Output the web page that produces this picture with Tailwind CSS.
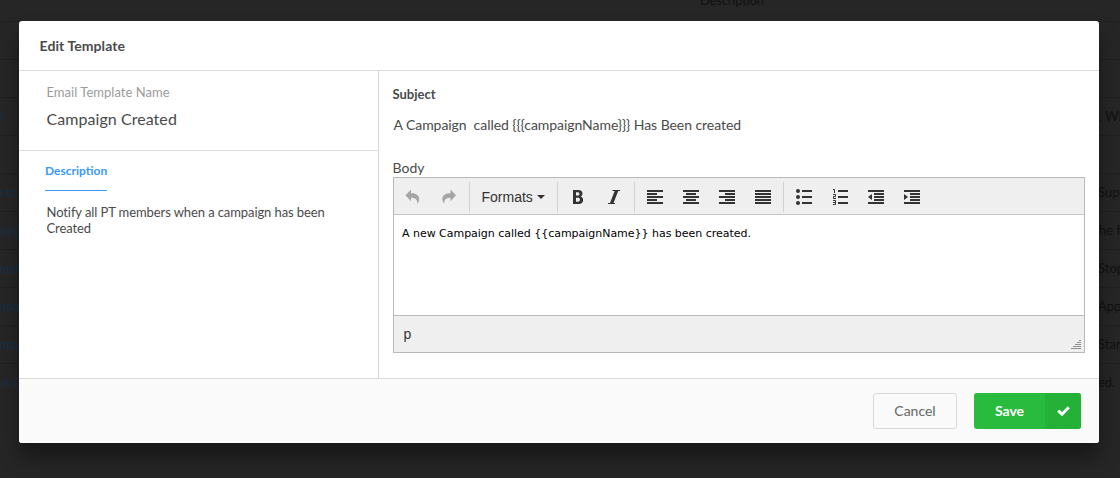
<!DOCTYPE html>
<html lang="en">
<head>
<meta charset="utf-8">
<title>Edit Template</title>
<script src="https://cdn.jsdelivr.net/npm/@tailwindcss/browser@4"></script>
</head>
<body class="relative h-[478px] w-[1120px] overflow-hidden bg-[#262626] font-['Lato',sans-serif] text-[#4a4a4a]">

<!-- dimmed table behind the dialog -->
<div class="flex h-full flex-col text-[13px] leading-[37px] text-[#111] whitespace-nowrap">
  <div class="h-[22px] shrink-0 border-b border-[#202020] pl-[700px] tracking-[-0.2px]"><div class="-mt-[18px]">Description</div></div>
  <div class="h-[38px] shrink-0 border-b border-[#202020]"></div>
  <div class="h-[38px] shrink-0 border-b border-[#202020]"></div>
  <div class="flex h-[38px] shrink-0 justify-between border-b border-[#202020]"><span class="flex w-[4px] justify-end text-[#172f48]">n</span><span class="w-[21px]">, Wi</span></div>
  <div class="h-[38px] shrink-0 border-b border-[#202020]"></div>
  <div class="flex h-[38px] shrink-0 justify-between border-b border-[#202020]"><span class="flex w-[18px] justify-end text-[#172f48]">n to</span><span class="w-[22px]">Supp</span></div>
  <div class="flex h-[38px] shrink-0 justify-between border-b border-[#202020]"><span class="flex w-[22px] justify-end text-[#172f48]">Supp</span><span class="w-[21px]">he f</span></div>
  <div class="flex h-[38px] shrink-0 justify-between border-b border-[#202020]"><span class="flex w-[20px] justify-end text-[#172f48]">mpa</span><span class="w-[22px]">Stop</span></div>
  <div class="flex h-[38px] shrink-0 justify-between border-b border-[#202020]"><span class="flex w-[20px] justify-end text-[#172f48]">mpa</span><span class="w-[22px]">App</span></div>
  <div class="flex h-[38px] shrink-0 justify-between border-b border-[#202020]"><span class="flex w-[20px] justify-end text-[#172f48]">mpa</span><span class="w-[22px]">Star</span></div>
  <div class="flex h-[38px] shrink-0 justify-between"><span class="flex w-[22px] justify-end text-[#172f48]">us C</span><span class="w-[22px]">ed.</span></div>
</div>

<!-- dialog -->
<div class="absolute top-[21px] left-[19px] flex h-[422px] w-[1080px] flex-col rounded-[3px] bg-white shadow-[0_14px_20px_rgba(0,0,0,0.4)]">
  <div class="h-[50px] shrink-0 border-b border-[#dcdcdc] pl-[20.5px] text-[14px] leading-[49px] font-bold tracking-[0.08px]">Edit Template</div>

  <div class="flex h-[307px] shrink-0">
    <div class="w-[360px] shrink-0 border-r border-[#d8d8d8]">
      <div class="h-[80px] border-b border-[#dcdcdc] pl-[27.5px]">
        <div class="pt-[12px] text-[13px] leading-[18px] tracking-[0.03px] text-[#9b9b9b]">Email Template Name</div>
        <div class="pt-[8px] text-[16px] leading-[20px] tracking-[0.06px]">Campaign Created</div>
      </div>
      <div class="pl-[26px]">
        <div class="inline-block h-[40px] border-b border-[#3b99f7] text-[12px] leading-[40px] font-bold text-[#3b99f7]">Description</div>
      </div>
      <div class="mt-[13px] pl-[27.5px] text-[13px] leading-[16px] tracking-[-0.09px]">Notify all PT members when a campaign has been<br>Created</div>
    </div>

    <div class="flex w-[720px] flex-col pl-[14px]">
      <div class="-ml-[0.5px] pt-[14px] text-[13px] leading-[18px] font-bold">Subject</div>
      <div class="pt-[13px] pl-[0.5px] text-[14px] leading-[18px] tracking-[-0.06px] whitespace-pre">A Campaign  called {{{campaignName}}} Has Been created</div>
      <div class="mt-[25px] -ml-[0.5px] h-[18px] text-[14px] leading-[18px]">Body</div>

      <div class="flex h-[176px] w-[692px] shrink-0 flex-col border border-[#b9b9b9]">
        <div class="flex h-[37px] shrink-0 items-center border-b border-[#c4c4c4] bg-[#efefef] pt-[2px] pl-px text-[#333]">
          <div class="flex w-[36px] justify-center text-[#a5a5a5]"><svg class="size-4" viewBox="0 0 16 16" fill="currentColor"><path d="M6 .5v3.700c4.800 0 8.200 1.900 8.200 5.800 0 1.800-.8 3.500-2 4.700.5-4-1.800-6-6.200-6v3.500L.5 6.300z"/></svg></div>
          <div class="flex w-[36px] justify-center text-[#a5a5a5]"><svg class="size-4" viewBox="0 0 16 16" fill="currentColor"><path d="M9.500.5v3.700C4.700 4.200 1.300 6.100 1.300 10c0 1.800.8 3.500 2 4.700-.5-4 1.800-6 6.200-6v3.500L15 6.300z"/></svg></div>
          <div class="mx-[2px] h-[30px] w-px bg-[#d2d2d2]"></div>
          <div class="flex w-[83px] items-center pl-[9.5px] font-['Liberation_Sans',sans-serif] text-[14px] leading-[20px]"><span>Formats</span><svg class="ml-[4px] h-[4px] w-[8px]" viewBox="0 0 8 4" fill="currentColor"><path d="M0 0h8L4 4z"/></svg></div>
          <div class="mx-[2px] h-[30px] w-px bg-[#d2d2d2]"></div>
          <div class="flex w-[36px] justify-center"><svg class="size-4" viewBox="0 0 16 16" fill="currentColor" fill-rule="evenodd"><path d="M3 1h5.500c2.500 0 4 1.300 4 3.500 0 1.400-.7 2.500-1.800 3 1.500.5 2.400 1.700 2.400 3.400 0 2.500-1.700 4.100-4.500 4.100H3zM6 3.300v3.300h1.600c1.200 0 1.800-.6 1.800-1.700s-.6-1.600-1.800-1.600zM6 8.800v3.900h1.900c1.300 0 2-.7 2-2s-.7-1.900-2-1.900z"/></svg></div>
          <div class="flex w-[36px] justify-center"><svg class="size-4" viewBox="0 0 16 16" fill="currentColor"><path d="M6.500 1H14v1h-1.800L7.500 14H9v1H2v-1h2L8.700 2H6.500z"/></svg></div>
          <div class="mx-[2px] h-[30px] w-px bg-[#d2d2d2]"></div>
          <div class="flex w-[36px] justify-center"><svg class="size-4" viewBox="0 0 16 16" fill="currentColor"><path d="M0 1h16v2H0zM0 4h10v2H0zM0 7h16v2H0zM0 10h10v2H0zM0 13h16v2H0z"/></svg></div>
          <div class="flex w-[36px] justify-center"><svg class="size-4" viewBox="0 0 16 16" fill="currentColor"><path d="M0 1h16v2H0zM3 4h10v2H3zM0 7h16v2H0zM3 10h10v2H3zM0 13h16v2H0z"/></svg></div>
          <div class="flex w-[36px] justify-center"><svg class="size-4" viewBox="0 0 16 16" fill="currentColor"><path d="M0 1h16v2H0zM6 4h10v2H6zM0 7h16v2H0zM6 10h10v2H6zM0 13h16v2H0z"/></svg></div>
          <div class="flex w-[36px] justify-center"><svg class="size-4" viewBox="0 0 16 16" fill="currentColor"><path d="M0 1h16v2H0zM0 4h16v2H0zM0 7h16v2H0zM0 10h16v2H0zM0 13h16v2H0z"/></svg></div>
          <div class="mx-[2px] h-[30px] w-px bg-[#d2d2d2]"></div>
          <div class="flex w-[36px] justify-center"><svg class="size-4" viewBox="0 0 16 16" fill="currentColor"><path d="M6 1h10v2H6zM6 7h10v2H6zM6 13h10v2H6z"/><circle cx="2" cy="2" r="2"/><circle cx="2" cy="8" r="2"/><circle cx="2" cy="14" r="2"/></svg></div>
          <div class="flex w-[36px] justify-center"><svg class="size-4" viewBox="0 0 16 16" fill="currentColor"><path d="M6 1h10v2H6zM6 7h10v2H6zM6 13h10v2H6z"/><path d="M1 .5h1.500V4M1 5.500h2.500v2h-2v2H4M1 11.500h2.500v4H1M1 13.500h2.500" fill="none" stroke="currentColor" stroke-width="1"/></svg></div>
          <div class="flex w-[36px] justify-center"><svg class="size-4" viewBox="0 0 16 16" fill="currentColor"><path d="M0 1h16v2H0zM6 4h10v2H6zM6 7h10v2H6zM6 10h10v2H6zM0 13h16v2H0zM4 5v6L0 8z"/></svg></div>
          <div class="flex w-[36px] justify-center"><svg class="size-4" viewBox="0 0 16 16" fill="currentColor"><path d="M0 1h16v2H0zM6 4h10v2H6zM6 7h10v2H6zM6 10h10v2H6zM0 13h16v2H0zM0 5v6l4-3z"/></svg></div>
        </div>
        <div class="h-[100px] shrink-0 pt-[11px] pl-[8px] font-['DejaVu_Sans',sans-serif] text-[11px] leading-[16px] tracking-[-0.025px] text-black">A new Campaign called {{campaignName}} has been created.</div>
        <div class="flex h-[37px] shrink-0 items-end justify-between border-t border-[#b9b9b9] bg-[#efefef] pr-[3px] pl-[9.5px] font-['Liberation_Sans',sans-serif] text-[14px] leading-[36px] text-[#333]">
          <span>p</span>
          <svg class="mb-[3px] h-[9px] w-[10px]" viewBox="0 0 10 9" fill="#8f8f8f"><path d="M8 0h2v1H8zM6 2h4v1H6zM4 4h6v1H4zM2 6h8v1H2zM0 8h10v1H0z"/></svg>
        </div>
      </div>
    </div>
  </div>

  <div class="flex h-[65px] shrink-0 items-start justify-end rounded-b-[3px] border-t border-[#dcdcdc] bg-[#fafafa] pt-[14px] pr-[18px] text-[14px]">
    <div class="mr-[17px] h-[36px] w-[84px] rounded-[3px] border border-[#d8d8d8] text-center leading-[34px] text-[#666]">Cancel</div>
    <div class="flex h-[36px] w-[107px] overflow-hidden rounded-[3px] bg-[#28bb3d] text-white">
      <div class="w-[71px] text-center leading-[35px] font-bold">Save</div>
      <div class="flex w-[36px] items-center justify-center bg-[#25b038]"><svg class="h-[10px] w-[13px]" viewBox="0 0 13 10" fill="none" stroke="#fff" stroke-width="3"><path d="M1.200 4.600 5 8.200 11.800 1.300"/></svg></div>
    </div>
  </div>
</div>
</body>
</html>
